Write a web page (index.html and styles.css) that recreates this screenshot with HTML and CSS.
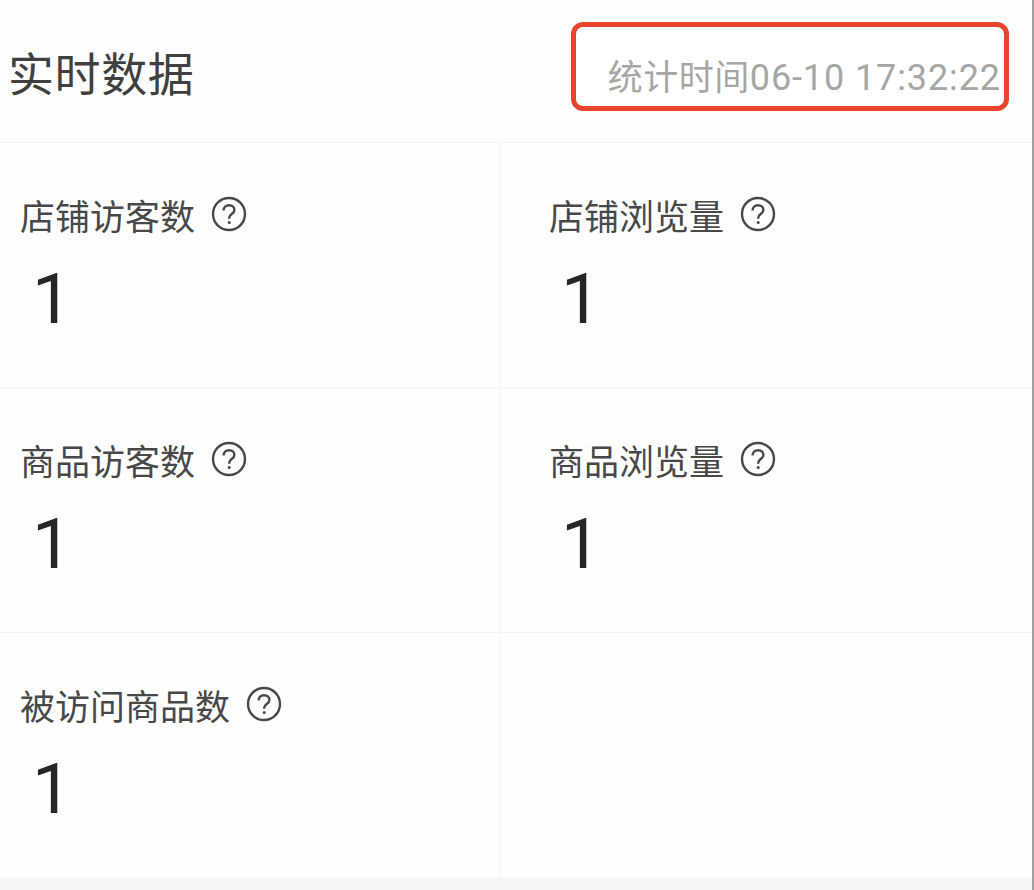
FILE: index.html
```html
<!DOCTYPE html>
<html lang="zh">
<head>
<meta charset="utf-8">
<title>实时数据</title>
<link rel="stylesheet" href="styles.css">
</head>
<body>
<main class="panel">
  <header class="head">
    <h1 class="title">实时数据</h1>
    <div class="stamp"><span class="time">统计时间<span class="digits">06-10 17:32:22</span></span></div>
  </header>
  <section class="grid">
    <div class="cell">
      <div class="label">店铺访客数<svg class="help" viewBox="0 0 36 36"><circle cx="18" cy="18" r="16" /><path d="M12.6 14.4c0-3.2 2.4-5.2 5.5-5.2 3 0 5.3 1.9 5.3 4.6 0 2-1 3.1-2.7 4.3-1.6 1.100-2.500 2-2.500 4v.6" /><circle class="dot" cx="18.200" cy="26.600" r="1.500" /></svg></div>
      <div class="value">1</div>
    </div>
    <div class="cell">
      <div class="label">店铺浏览量<svg class="help" viewBox="0 0 36 36"><circle cx="18" cy="18" r="16" /><path d="M12.6 14.4c0-3.2 2.4-5.2 5.5-5.2 3 0 5.3 1.9 5.3 4.6 0 2-1 3.1-2.7 4.3-1.6 1.100-2.500 2-2.500 4v.6" /><circle class="dot" cx="18.200" cy="26.600" r="1.500" /></svg></div>
      <div class="value">1</div>
    </div>
    <div class="cell">
      <div class="label">商品访客数<svg class="help" viewBox="0 0 36 36"><circle cx="18" cy="18" r="16" /><path d="M12.6 14.4c0-3.2 2.4-5.2 5.5-5.2 3 0 5.3 1.9 5.3 4.6 0 2-1 3.1-2.7 4.3-1.6 1.100-2.500 2-2.500 4v.6" /><circle class="dot" cx="18.200" cy="26.600" r="1.500" /></svg></div>
      <div class="value">1</div>
    </div>
    <div class="cell">
      <div class="label">商品浏览量<svg class="help" viewBox="0 0 36 36"><circle cx="18" cy="18" r="16" /><path d="M12.6 14.4c0-3.2 2.4-5.2 5.5-5.2 3 0 5.3 1.9 5.3 4.6 0 2-1 3.1-2.7 4.3-1.6 1.100-2.500 2-2.500 4v.6" /><circle class="dot" cx="18.200" cy="26.600" r="1.500" /></svg></div>
      <div class="value">1</div>
    </div>
    <div class="cell">
      <div class="label">被访问商品数<svg class="help" viewBox="0 0 36 36"><circle cx="18" cy="18" r="16" /><path d="M12.6 14.4c0-3.2 2.4-5.2 5.5-5.2 3 0 5.3 1.9 5.3 4.6 0 2-1 3.1-2.7 4.3-1.6 1.100-2.500 2-2.500 4v.6" /><circle class="dot" cx="18.200" cy="26.600" r="1.500" /></svg></div>
      <div class="value">1</div>
    </div>
    <div class="cell"></div>
  </section>
</main>
</body>
</html>
```
FILE: styles.css
```css
* { box-sizing: border-box; }
html, body { margin: 0; height: 100%; }
body {
  width: 1034px;
  height: 890px;
  overflow: hidden;
  background: #f5f5f5;
  border-right: 2px solid #a0a0a0;
  font-family: "Noto Sans CJK SC", "Noto Sans", sans-serif;
  color: #333;
}
.panel {
  width: 1032px;
  height: 877px;
  background: #fefefe;
  display: flex;
  flex-direction: column;
}
.head {
  height: 143px;
  flex: none;
  display: flex;
  justify-content: space-between;
  align-items: flex-start;
  padding: 22px 23px 0 8px;
  border-bottom: 1px solid #f3f3f3;
}
.title {
  margin: 0;
  font-size: 46px;
  font-weight: 400;
  letter-spacing: 0.6px;
  line-height: 98px;
  color: #404040;
}
.stamp {
  width: 438px;
  height: 89px;
  border: 5px solid #e8452c;
  border-radius: 12px;
  padding: 23px 3px 0 0;
  text-align: right;
  background: #fff;
}
.time {
  font-size: 35px;
  line-height: 50px;
  letter-spacing: 0.5px;
  color: #a6a6a6;
  font-family: "Noto Sans CJK SC", sans-serif;
  white-space: nowrap;
}
.digits {
  font-family: "Roboto", sans-serif;
  font-size: 36px;
  letter-spacing: 0.9px;
}
.grid {
  display: grid;
  grid-template-columns: 501px 1fr;
  grid-auto-rows: 245px;
}
.cell {
  padding: 47px 0 0 20px;
  border-bottom: 1px solid #f3f3f3;
}
.cell:nth-child(odd) { border-right: 1px solid #f3f3f3; }
.cell:nth-child(even) { padding-left: 48px; }
.cell:nth-last-child(-n+2) { border-bottom: 0; }
.label {
  display: flex;
  align-items: center;
  font-size: 35px;
  line-height: 50px;
  color: #484848;
}
.help {
  width: 36px;
  height: 36px;
  margin-left: 16px;
  margin-top: -2px;
  fill: none;
  stroke: #484848;
  stroke-width: 2.4;
}
.help .dot { fill: #484848; stroke: none; }
.value {
  font-family: "Roboto", sans-serif;
  font-weight: 400;
  font-size: 71px;
  line-height: 84px;
  margin-top: 17px;
  padding-left: 12px;
  color: #262626;
}
```
